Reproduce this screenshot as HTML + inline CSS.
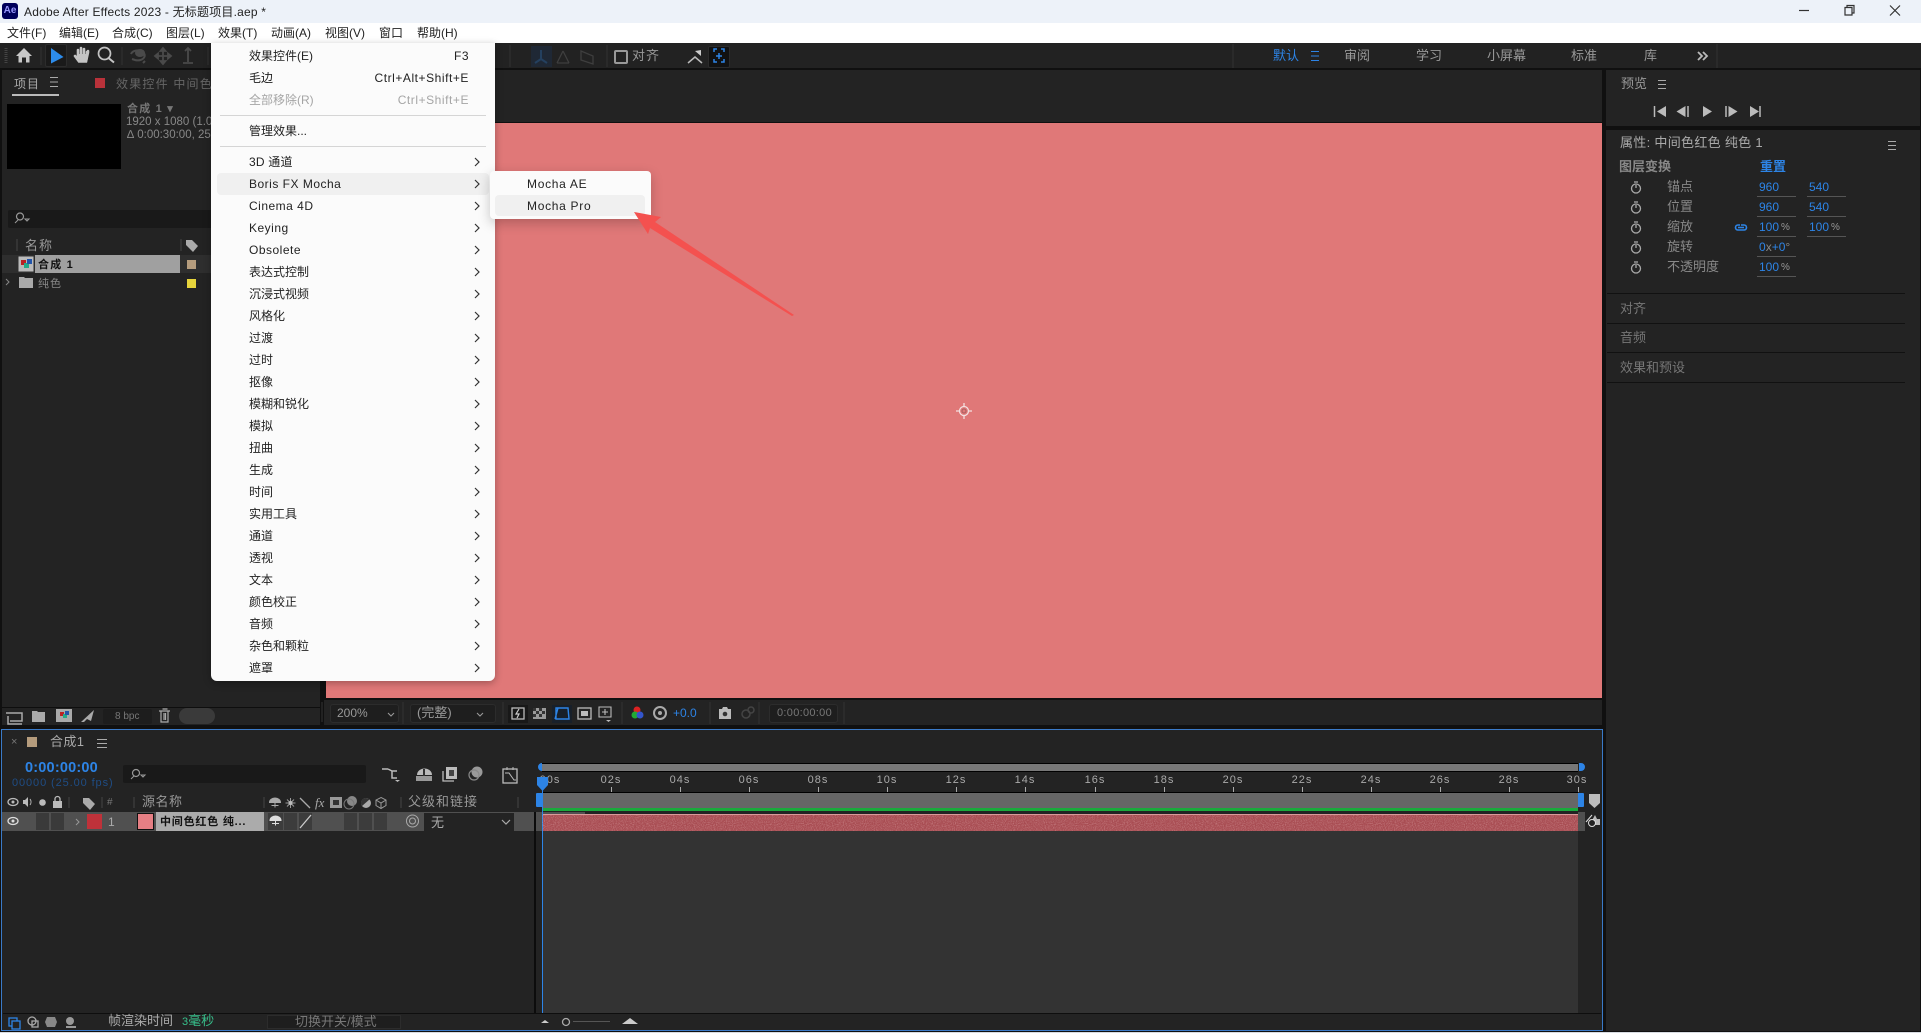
<!DOCTYPE html>
<html lang="zh-CN"><head><meta charset="utf-8"><title>Adobe After Effects 2023</title>
<style>
*{box-sizing:border-box;margin:0;padding:0}
html,body{width:1921px;height:1033px;overflow:hidden;background:#101010}
body{position:relative;font:12px/16px "Liberation Sans","Noto Sans CJK SC",sans-serif;color:#999}
.b,.t{position:absolute}
.t{white-space:nowrap}
.s{letter-spacing:1px}
.bl{color:#2d84e6}
.k{color:#222}
svg{position:absolute;left:0;top:0}
.m{position:absolute;left:211px;top:43px;width:284px;height:638px;background:#fbfbfb;border-radius:0 0 6px 6px;color:#222;box-shadow:0 2px 8px rgba(0,0,0,.3)}
.m .t{left:38px}
.m .l{letter-spacing:.5px;font-size:12px}
.sep{position:absolute;left:9px;width:266px;height:1px;background:#d5d5d5}
.hl{position:absolute;border-radius:4px;background:#f0f0f0}
</style></head><body>
<!-- title + menu bar -->
<div class="b" style="left:0;top:0;width:1921px;height:23px;background:#edf2f9"></div>
<div class="b" style="left:0;top:23px;width:1921px;height:20px;background:#fff"></div>
<div class="b" style="left:2px;top:3px;width:16px;height:16px;background:#00005b;border-radius:3px;color:#9999ff;font:bold 10px/16px 'Liberation Sans',sans-serif;text-align:center">Ae</div>
<span class="t" style="left:24px;top:4px;color:#222;letter-spacing:.2px">Adobe After Effects 2023 - 无标题项目.aep *</span>
<span class="t k" style="left:7px;top:25px">文件(F)</span>
<span class="t k" style="left:59px;top:25px">编辑(E)</span>
<span class="t k" style="left:112px;top:25px">合成(C)</span>
<span class="t k" style="left:166px;top:25px">图层(L)</span>
<span class="t k" style="left:218px;top:25px">效果(T)</span>
<span class="t k" style="left:271px;top:25px">动画(A)</span>
<span class="t k" style="left:325px;top:25px">视图(V)</span>
<span class="t k" style="left:379px;top:25px">窗口</span>
<span class="t k" style="left:417px;top:25px">帮助(H)</span>

<!-- panels -->
<div class="b" style="left:0;top:43px;width:1921px;height:25px;background:#222"></div>
<div class="b" style="left:2px;top:70px;width:318px;height:655px;background:#232323"></div>
<div class="b" style="left:324px;top:70px;width:1278px;height:52px;background:#232323"></div>
<div class="b" style="left:326px;top:123px;width:1276px;height:575px;background:#e07878"></div>
<div class="b" style="left:324px;top:700px;width:1278px;height:25px;background:#232323"></div>
<div class="b" style="left:1606px;top:70px;width:314px;height:56px;background:#232323"></div>
<div class="b" style="left:1606px;top:130px;width:314px;height:901px;background:#232323"></div>
<div class="b" style="left:0;top:1032px;width:1921px;height:1px;background:#d8dce2"></div>

<!-- project panel -->
<span class="t s" style="left:14px;top:76px;color:#aaa">项目</span>
<div class="b" style="left:12px;top:94px;width:47px;height:2px;background:#bbb"></div>
<div class="b" style="left:95px;top:78px;width:10px;height:10px;background:#b9323a"></div>
<span class="t" style="left:116px;top:76px;color:#666;letter-spacing:1.2px">效果控件 中间色</span>
<div class="b" style="left:7px;top:104px;width:114px;height:65px;background:#000"></div>
<span class="t" style="left:127px;top:101px;color:#777;font-weight:bold;font-size:11px;letter-spacing:1.2px">合成 1 ▾</span>
<span class="t" style="left:126px;top:114px;color:#888;font-size:11.5px">1920 x 1080 (1.00)</span>
<span class="t" style="left:127px;top:127px;color:#888;font-size:11.5px">∆ 0:00:30:00, 25.00</span>
<div class="b" style="left:8px;top:210px;width:314px;height:18px;background:#191919;border-radius:2px"></div>
<span class="t s" style="left:25px;top:238px;color:#999;font-size:13px">名称</span>
<div class="b" style="left:2px;top:255px;width:320px;height:18px;background:#2e2e2e"></div>
<div class="b" style="left:35px;top:255px;width:145px;height:18px;background:#a0a0a0"></div>
<span class="t" style="left:38px;top:257px;color:#111;font-weight:bold;font-size:11px;letter-spacing:1.2px">合成 1</span>
<div class="b" style="left:187px;top:260px;width:9px;height:9px;background:#b59c7d"></div>
<span class="t s" style="left:38px;top:276px;color:#888;font-size:11px">纯色</span>
<div class="b" style="left:187px;top:279px;width:9px;height:9px;background:#e6d43c"></div>
<div class="b" style="left:2px;top:707px;width:318px;height:1px;background:#0e0e0e"></div>
<div class="b" style="left:103px;top:709px;width:49px;height:15px;background:#1d1d1d;border-radius:2px"></div>
<span class="t" style="left:115px;top:709px;color:#777;font-size:10px">8 bpc</span>
<div class="b" style="left:179px;top:708px;width:36px;height:16px;background:#3a3a3a;border-radius:8px"></div>

<!-- toolbar right -->
<div class="b" style="left:45px;top:44px;width:22px;height:23px;background:#1a1a1a;border:1px solid #2c2c2c;border-radius:2px"></div>
<div class="b" style="left:531px;top:46px;width:21px;height:21px;background:#1f2835"></div>
<div class="b" style="left:614px;top:50px;width:14px;height:14px;border:2px solid #999;border-radius:2px"></div>
<span class="t s" style="left:632px;top:48px;color:#999;font-size:13px">对齐</span>
<div class="b" style="left:708px;top:46px;width:22px;height:22px;background:#111;border:1px solid #2b2b2b;border-radius:2px"></div>
<span class="t bl" style="left:1273px;top:48px;font-size:13px">默认</span>
<span class="t" style="left:1344px;top:48px;font-size:13px">审阅</span>
<span class="t" style="left:1416px;top:48px;font-size:13px">学习</span>
<span class="t" style="left:1487px;top:48px;font-size:13px">小屏幕</span>
<span class="t" style="left:1571px;top:48px;font-size:13px">标准</span>
<span class="t" style="left:1644px;top:48px;font-size:13px">库</span>

<!-- right panels -->
<span class="t" style="left:1621px;top:76px;font-size:13px">预览</span>
<span class="t" style="left:1620px;top:135px;font-size:13px;color:#aaa;letter-spacing:.3px">属性: 中间色红色 纯色 1</span>
<span class="t" style="left:1619px;top:159px;font-size:13px;color:#888;font-weight:bold">图层变换</span>
<span class="t bl" style="left:1760px;top:159px;font-size:13px;font-weight:bold">重置</span>
<span class="t" style="left:1667px;top:179px;font-size:13px;color:#888">锚点</span>
<span class="t" style="left:1667px;top:199px;font-size:13px;color:#888">位置</span>
<span class="t" style="left:1667px;top:219px;font-size:13px;color:#888">缩放</span>
<span class="t" style="left:1667px;top:239px;font-size:13px;color:#888">旋转</span>
<span class="t" style="left:1667px;top:259px;font-size:13px;color:#888">不透明度</span>
<span class="t bl" style="left:1759px;top:179px">960</span><span class="t bl" style="left:1809px;top:179px">540</span>
<span class="t bl" style="left:1759px;top:199px">960</span><span class="t bl" style="left:1809px;top:199px">540</span>
<span class="t bl" style="left:1759px;top:219px">100</span><span class="t" style="left:1781px;top:220px;font-size:10px">%</span><span class="t bl" style="left:1809px;top:219px">100</span><span class="t" style="left:1831px;top:220px;font-size:10px">%</span>
<span class="t bl" style="left:1759px;top:239px">0<span style="color:#888">x</span>+0<span style="color:#888">°</span></span>
<span class="t bl" style="left:1759px;top:259px">100</span><span class="t" style="left:1781px;top:260px;font-size:10px">%</span>
<div class="b" style="left:1757px;top:196px;width:39px;height:1px;background:#555"></div><div class="b" style="left:1807px;top:196px;width:39px;height:1px;background:#555"></div>
<div class="b" style="left:1757px;top:216px;width:39px;height:1px;background:#555"></div><div class="b" style="left:1807px;top:216px;width:39px;height:1px;background:#555"></div>
<div class="b" style="left:1757px;top:236px;width:39px;height:1px;background:#555"></div><div class="b" style="left:1807px;top:236px;width:39px;height:1px;background:#555"></div>
<div class="b" style="left:1757px;top:256px;width:39px;height:1px;background:#555"></div>
<div class="b" style="left:1757px;top:276px;width:39px;height:1px;background:#555"></div>
<div class="b" style="left:1607px;top:293px;width:298px;height:1px;background:#111"></div>
<span class="t" style="left:1620px;top:301px;font-size:13px;color:#777">对齐</span>
<div class="b" style="left:1607px;top:323px;width:298px;height:1px;background:#111"></div>
<span class="t" style="left:1620px;top:330px;font-size:13px;color:#777">音频</span>
<div class="b" style="left:1607px;top:352px;width:298px;height:1px;background:#111"></div>
<span class="t" style="left:1620px;top:360px;font-size:13px;color:#777">效果和预设</span>
<div class="b" style="left:1607px;top:382px;width:298px;height:1px;background:#111"></div>

<!-- viewer footer -->
<div class="b" style="left:330px;top:704px;width:69px;height:19px;background:#1e1e1e;border:1px solid #2c2c2c;border-radius:3px"></div>
<span class="t" style="left:337px;top:705px;color:#999">200%</span>
<div class="b" style="left:410px;top:704px;width:86px;height:19px;background:#1e1e1e;border:1px solid #2c2c2c;border-radius:3px"></div>
<span class="t" style="left:417px;top:705px;color:#999;font-size:13px">(完整)</span>
<div class="b" style="left:508px;top:705px;width:20px;height:18px;background:#181818"></div>
<div class="b" style="left:552px;top:705px;width:20px;height:18px;background:#18202a"></div>
<span class="t bl" style="left:673px;top:705px">+0.0</span>
<div class="b" style="left:769px;top:704px;width:69px;height:19px;background:#1e1e1e;border:1px solid #2c2c2c;border-radius:3px"></div>
<span class="t" style="left:777px;top:705px;color:#777;font-size:11px;letter-spacing:.3px">0:00:00:00</span>

<!-- timeline -->
<div class="b" style="left:1px;top:729px;width:1602px;height:302px;background:#232323;border:1px solid #3a7ac8"></div>
<span class="t" style="left:11px;top:734px;color:#777;font-size:11px">×</span>
<div class="b" style="left:27px;top:737px;width:10px;height:10px;background:#b59c7d"></div>
<span class="t" style="left:50px;top:734px;color:#aaa;letter-spacing:.4px;font-size:13px">合成1</span>
<span class="t bl" style="left:25px;top:760px;font-weight:bold;font-size:14.5px;letter-spacing:.2px">0:00:00:00</span>
<span class="t" style="left:12px;top:775px;color:#1f4d85;font-size:11px;letter-spacing:.9px">00000 (25.00 fps)</span>
<div class="b" style="left:123px;top:765px;width:243px;height:18px;background:#191919;border-radius:2px"></div>
<span class="t" style="left:142px;top:794px;font-size:13px;color:#999;letter-spacing:.5px">源名称</span>
<span class="t" style="left:408px;top:794px;font-size:13px;color:#999;letter-spacing:1px">父级和链接</span>
<span class="t" style="left:107px;top:795px;font-size:10px;color:#777">#</span>
<div class="b" style="left:2px;top:812px;width:532px;height:19px;background:#505050"></div>
<div class="b" style="left:36px;top:813px;width:13px;height:17px;background:#3a3a3a"></div>
<div class="b" style="left:51px;top:813px;width:13px;height:17px;background:#3a3a3a"></div>
<div class="b" style="left:87px;top:814px;width:15px;height:15px;background:#bf323a"></div>
<span class="t" style="left:108px;top:814px;color:#aaa;font-size:12px">1</span>
<div class="b" style="left:137px;top:813px;width:17px;height:17px;background:#e67f84;border:1px solid #111"></div>
<div class="b" style="left:156px;top:812px;width:108px;height:19px;background:#ababab"></div>
<span class="t" style="left:160px;top:814px;color:#111;font-weight:bold;font-size:11px;letter-spacing:.8px">中间色红色 纯...</span>
<div class="b" style="left:268px;top:813px;width:15px;height:17px;background:#3c3c3c"></div>
<div class="b" style="left:284px;top:813px;width:13px;height:17px;background:#3c3c3c"></div>
<div class="b" style="left:299px;top:813px;width:13px;height:17px;background:#3c3c3c"></div>
<div class="b" style="left:344px;top:813px;width:13px;height:17px;background:#3c3c3c"></div>
<div class="b" style="left:359px;top:813px;width:13px;height:17px;background:#3c3c3c"></div>
<div class="b" style="left:374px;top:813px;width:13px;height:17px;background:#3c3c3c"></div>
<div class="b" style="left:424px;top:813px;width:90px;height:18px;background:#232323"></div>
<span class="t" style="left:431px;top:815px;color:#aaa;font-size:13px">无</span>

<div class="b" style="left:534px;top:812px;width:2px;height:201px;background:#0c0c0c"></div>
<div class="b" style="left:542px;top:763px;width:1036px;height:9px;background:#777;border-top:1px solid #000;border-bottom:1px solid #000"></div>
<div class="b" style="left:542px;top:792px;width:1036px;height:16px;background:#666;border-top:1px solid #000"></div>
<div class="b" style="left:542px;top:808px;width:1036px;height:3px;background:#1aaa3c"></div>
<div class="b" style="left:536px;top:812px;width:49px;height:19px;background:#505050"></div>
<div class="b" style="left:1578px;top:812px;width:7px;height:19px;background:#505050"></div>
<div class="b" style="left:542px;top:814px;width:1036px;height:17px;background:#a84c52;border-top:1px solid #d99a9a"></div>
<div class="b" style="left:542px;top:831px;width:1036px;height:182px;background:#333"></div>
<div class="b" style="left:542px;top:790px;width:1px;height:223px;background:#2d84e6"></div>
<div class="b" style="left:3px;top:1013px;width:1598px;height:1px;background:#0e0e0e"></div>
<span class="t" style="left:108px;top:1013px;color:#aaa;font-size:13px">帧渲染时间</span>
<span class="t" style="left:182px;top:1013px;color:#37c08c;font-size:13px"><span style="font-size:11px">3</span>毫秒</span>
<div class="b" style="left:267px;top:1015px;width:134px;height:14px;background:#1e1e1e;border:1px solid #2c2c2c"></div>
<span class="t" style="left:295px;top:1014px;color:#777;font-size:13px">切换开关/模式</span>

<!-- icons -->
<svg width="1921" height="1033" viewBox="0 0 1921 1033" fill="none">
 <defs><filter id="n" x="0" y="0" width="100%" height="100%"><feTurbulence type="fractalNoise" baseFrequency="0.9" numOctaves="2" seed="4"/><feColorMatrix values="0 0 0 0 0.85  0 0 0 0 0.55  0 0 0 0 0.55  0 0 0 1.6 -0.65"/></filter></defs>
 <rect x="542" y="815" width="1036" height="16" filter="url(#n)" opacity=".55"/>
 <!-- window controls -->
 <path d="M1799 10.500h10" stroke="#333" stroke-width="1.200"/>
 <path d="M1845 7.500h7v7.500h-7zM1847 7.500v-2h7v7.500h-2" stroke="#333" stroke-width="1.200"/>
 <path d="M1890 5.500l10 10M1900 5.500l-10 10" stroke="#333" stroke-width="1.200"/>
 <!-- toolbar -->
 <path d="M6 48v16" stroke="#444" stroke-width="3" stroke-dasharray="1 1"/>
 <path d="M16 56l8-8 8 8h-2.500v6.500h-3.500v-5h-4v5h-3.500v-6.500z" fill="#c8c8c8"/>
 <path d="M51 48l12.500 9-12.500 6.500z" fill="#2d8ceb"/>
 <path d="M75 56l4 5.500h7l2-9v-1.500M78 58v-8M81 57v-9M84 57v-8M87 57v-5" stroke="#c4c4c4" stroke-width="2.600" stroke-linecap="round"/>
 <path d="M76 56l5 6h6l1-4v-4l-9 0z" fill="#c4c4c4"/>
 <circle cx="104.500" cy="53.500" r="6" stroke="#c4c4c4" stroke-width="1.700"/><path d="M108.500 58l5.500 4.500" stroke="#c4c4c4" stroke-width="2"/>
 <path d="M41 47v18M122 47v18M208 47v18M510 45v22M607 45v22M1233 44v24M1717 44v24" stroke="#333" stroke-width="1"/>
 <path d="M131 54a7 5 0 1 1 4 6l-3-1M145 61l-2 2" stroke="#4a4a4a" stroke-width="2"/><ellipse cx="140" cy="53" rx="5" ry="4" fill="#4a4a4a"/>
 <path d="M163 48v16M155 56h16M163 48l-2.500 3h5zM163 64l-2.500-3h5zM155 56l3-2.500v5zM171 56l-3-2.500v5z" stroke="#4a4a4a" stroke-width="1.800"/>
 <path d="M188 48v14M185 51l3-3 3 3M183 63h10" stroke="#4a4a4a" stroke-width="1.800"/>
 <path d="M535 63l6-4 6 4M541 50v9" stroke="#24405f" stroke-width="2"/>
 <path d="M557 63h12M563 51l-6 12M563 51l6 12" stroke="#3e3e3e" stroke-width="1.300"/>
 <path d="M581 51l12 5v8l-12-4zM581 51v9M593 56v8" stroke="#3e3e3e" stroke-width="1.300"/>
 <path d="M688 63l7-6 7 6" stroke="#bbb" stroke-width="1.500"/><path d="M695 51l6-1v6z" fill="#ccc"/>
 <path d="M714 52v-3h3M721 49h3v3M714 59v3h3M721 62h3v-3M719 53v6M716 56h6" stroke="#2d84e6" stroke-width="1.500"/>
 <path d="M1311 51.500h8M1311 56h8M1311 60.500h8" stroke="#2d84e6"/>
 <path d="M1698 52l4 4-4 4M1703 52l4 4-4 4" stroke="#bbb" stroke-width="1.800"/>
 <path d="M50 77.500h8M50 82h8M50 86.500h8" stroke="#aaa"/>
 <!-- preview -->
 <path d="M1658 80.500h8M1658 84.500h8M1658 88.500h8M1888 141.500h8M1888 145.500h8M1888 149.500h8" stroke="#aaa"/>
 <path d="M1654.500 106v11" stroke="#bbb" stroke-width="1.500"/><path d="M1666 106v11l-9-5.500z" fill="#bbb"/>
 <path d="M1688 106v11" stroke="#bbb" stroke-width="1.500"/><path d="M1685.500 106v11l-9-5.500z" fill="#bbb"/>
 <path d="M1703 106v11l9-5.500z" fill="#bbb"/>
 <path d="M1726 106v11" stroke="#bbb" stroke-width="1.500"/><path d="M1728.500 106v11l9-5.500z" fill="#bbb"/>
 <path d="M1760 106v11" stroke="#bbb" stroke-width="1.500"/><path d="M1750 106v11l9-5.500z" fill="#bbb"/>
 <!-- stopwatches -->
 <g stroke="#aaa" stroke-width="1.300">
  <circle cx="1636" cy="188.500" r="4.500"/><path d="M1634 182h4M1636 188v-3"/>
  <circle cx="1636" cy="208.500" r="4.500"/><path d="M1634 202h4M1636 208v-3"/>
  <circle cx="1636" cy="228.500" r="4.500"/><path d="M1634 222h4M1636 228v-3"/>
  <circle cx="1636" cy="248.500" r="4.500"/><path d="M1634 242h4M1636 248v-3"/>
  <circle cx="1636" cy="268.500" r="4.500"/><path d="M1634 262h4M1636 268v-3"/>
 </g>
 <path d="M1740 225h-2a2.500 2.500 0 0 0 0 5h3M1741 230h3a2.500 2.500 0 0 0 0-5h-3M1738 227.500h6" stroke="#2d84e6" stroke-width="1.600"/>
 <!-- project bits -->
 <circle cx="20" cy="216.500" r="3.500" stroke="#999" stroke-width="1.200"/><path d="M18 220l-3 3M25 219h4l-2 2z" stroke="#999"/>
 <path d="M17 239v12M181 239v12" stroke="#444"/>
 <path d="M186 240h6l6 6-5 6-7-7z" fill="#aaa"/>
 <rect x="18.500" y="256.500" width="15" height="15" fill="#bbb" stroke="#777" stroke-dasharray="2 1"/><rect x="21" y="260" width="5" height="5" fill="#b22"/><rect x="24" y="263" width="5" height="5" fill="#2a8"/><rect x="27" y="259" width="5" height="5" fill="#25a"/>
 <path d="M6 279l3 3-3 3" stroke="#888"/>
 <path d="M19 277h5l1 1h8v10H19z" fill="#aaa"/>
 <!-- project footer -->
 <path d="M6 713h16v8H10M8 716v8h14" stroke="#aaa" stroke-width="1.500"/>
 <path d="M32 711h5l1 1h7v10H32z" fill="#aaa"/>
 <rect x="56" y="709" width="16" height="13" fill="#aaa"/><rect x="60" y="712" width="4" height="4" fill="#b22"/><rect x="63" y="714" width="4" height="4" fill="#2a8"/><rect x="65" y="711" width="4" height="4" fill="#25a"/>
 <path d="M81 722l13-12-3 11-4-2-3 3z" fill="#aaa"/>
 <path d="M159 711h11M161 711v11h7v-11M164 713v7M165.500 713v7M162.500 709h5" stroke="#aaa" stroke-width="1.200"/>
 <path d="M388 711l3 3 3-3M477 711l3 3 3-3" stroke="#999" stroke-width="1.100" transform="translate(0,2)"/>
 <!-- viewer footer icons -->
 <rect x="512" y="708" width="12" height="11" stroke="#bbb" stroke-width="1.300"/><path d="M519 709l-3 5h3l-2 4" stroke="#ccc" stroke-width="1.200"/>
 <rect x="533" y="708" width="13" height="11" fill="#999"/><path d="M533 708h3v3h-3zM539 708h3v3h-3zM536 711h3v3h-3zM542 711h3v3h-3zM533 714h3v3h-3zM539 714h3v3h-3z" fill="#333"/>
 <path d="M556 708h12l1 11h-13zM555 719l3-11" stroke="#2d84e6" stroke-width="1.400"/>
 <rect x="578" y="708" width="13" height="11" stroke="#bbb" stroke-width="1.300"/><rect x="581" y="711" width="7" height="5" fill="#bbb"/>
 <path d="M599 707h12v10h-12zM605 709v6M602 712h6" stroke="#bbb" stroke-width="1.100"/><path d="M606 720h5l-2.500 2z" fill="#bbb"/>
 <circle cx="637" cy="710" r="3.500" fill="#d22"/><circle cx="635" cy="715" r="3.500" fill="#2a3"/><circle cx="640" cy="715" r="3.500" fill="#35c"/>
 <circle cx="660" cy="713" r="6" stroke="#aaa" stroke-width="2"/><circle cx="660" cy="713" r="2" fill="#aaa"/>
 <path d="M719 709h3l1-2h4l1 2h3v10h-12z" fill="#bbb"/><circle cx="725" cy="714" r="2.300" fill="#333"/>
 <circle cx="746" cy="714" r="4" stroke="#444" stroke-width="1.500"/><circle cx="751" cy="710" r="3" stroke="#444" stroke-width="1.500"/>
 <path d="M322 702v20M403 702v22M503 702v22M622 702v22M710 702v22M759 702v22M844 702v22" stroke="#333"/>
 <!-- timeline header -->
 <path d="M97 739.500h10M97 743.500h10M97 747.500h10" stroke="#aaa"/>
 <circle cx="136" cy="773" r="3.500" stroke="#999" stroke-width="1.200"/><path d="M134 776l-3 3M141 775h4l-2 2z" stroke="#999"/>
 <path d="M382 769h6M388 769l4 2h5M392 771v7h5" stroke="#bbb" stroke-width="1.500"/><path d="M395 780h5l-2.500 2z" fill="#bbb"/>
 <path d="M417 775a7.500 6.500 0 0 1 15 0z" fill="#bbb"/><path d="M416 776h16v5h-16z" fill="#999"/><path d="M424 769v7" stroke="#333" stroke-width="2"/>
 <rect x="446" y="767" width="11" height="12" fill="#bbb"/><path d="M443 771v10h11" stroke="#bbb" stroke-width="1.300"/><rect x="449" y="770" width="5" height="6" fill="#444"/>
 <circle cx="477" cy="772" r="5.500" fill="#999"/><circle cx="474" cy="775" r="5" stroke="#888" stroke-width="1.200"/>
 <rect x="503" y="769" width="14" height="14" stroke="#bbb" stroke-width="1.300"/><path d="M505 773h4l5 7h2M507 767v3M513 767v3" stroke="#bbb"/>
 <!-- switches header -->
 <ellipse cx="13" cy="802" rx="5" ry="3.500" stroke="#bbb" stroke-width="1.300"/><circle cx="13" cy="802" r="1.500" fill="#bbb"/>
 <path d="M23 800h2l3-3v10l-3-3h-2z" fill="#bbb"/><path d="M30 799a5 5 0 0 1 0 6" stroke="#bbb"/>
 <circle cx="42.500" cy="802.500" r="3.300" fill="#bbb"/>
 <rect x="53" y="801" width="9" height="7" fill="#bbb"/><path d="M55 801v-2a2.500 2.500 0 0 1 5 0v2" stroke="#bbb" stroke-width="1.300"/>
 <path d="M69 797v11M102 797v11M134 797v11M264 797v11M401 797v11M518 797v11" stroke="#444"/>
 <path d="M83 798h6l6 6-5 6-7-7z" fill="#aaa"/>
 <path d="M269.500 802.500a5.500 4.500 0 0 1 11 0zM275 802.500v5M271.500 805.500h7" stroke="#aaa" fill="#aaa"/>
 <path d="M290.500 798v10M285.500 803h10M287 799.500l7 7M294 799.500l-7 7" stroke="#999"/><circle cx="290.500" cy="803" r="2" fill="#bbb"/>
 <path d="M300 798l10 10" stroke="#aaa" stroke-width="1.300"/>
 <text x="315" y="807" fill="#aaa" font-family="Liberation Serif,serif" font-style="italic" font-size="13">fx</text>
 <rect x="330" y="797" width="12" height="11" fill="#999"/><rect x="333" y="800" width="6" height="5" fill="#333"/>
 <circle cx="352" cy="801" r="5" fill="#888"/><circle cx="349" cy="804" r="5" stroke="#777"/>
 <circle cx="366" cy="803" r="5" fill="#aaa"/><path d="M366 798a5 5 0 0 0-4 8l8-7" fill="#333"/>
 <path d="M381 797.500l5 2.500v5.500l-5 3-5-3V800zM376 800l5 3 5-3M381 803v5" stroke="#999"/>
 <!-- row -->
 <ellipse cx="13" cy="821" rx="5" ry="3.500" stroke="#ddd" stroke-width="1.300"/><circle cx="13" cy="821" r="1.500" fill="#ddd"/>
 <path d="M76 819l3 3-3 3" stroke="#999" stroke-width="1"/>
 <path d="M270 820.500a5.500 4.500 0 0 1 11 0zM275.500 820.500v5M272 823.500h7" stroke="#ddd" fill="#ddd"/>
 <path d="M300 828l11-13" stroke="#ccc" stroke-width="1.300"/>
 <circle cx="412.500" cy="821" r="6" stroke="#aaa"/><circle cx="412.500" cy="821" r="3" stroke="#aaa"/>
 <path d="M502 820l4 4 4-4" stroke="#aaa" stroke-width="1.200"/>
 <!-- timeline ruler -->
 <g fill="#aaa" font-family="Liberation Sans,sans-serif" font-size="11" letter-spacing="1" text-anchor="middle">
  <text x="550" y="783">00s</text><text x="611" y="783">02s</text><text x="680" y="783">04s</text><text x="749" y="783">06s</text><text x="818" y="783">08s</text><text x="887" y="783">10s</text><text x="956" y="783">12s</text><text x="1025" y="783">14s</text><text x="1095" y="783">16s</text><text x="1164" y="783">18s</text><text x="1233" y="783">20s</text><text x="1302" y="783">22s</text><text x="1371" y="783">24s</text><text x="1440" y="783">26s</text><text x="1509" y="783">28s</text><text x="1577" y="783">30s</text>
 </g>
 <path d="M611.500 787v5M680.500 787v5M749.500 787v5M818.500 787v5M887.500 787v5M956.500 787v5M1025.500 787v5M1095.500 787v5M1164.500 787v5M1233.500 787v5M1302.500 787v5M1371.500 787v5M1440.500 787v5M1509.500 787v5M1578.500 787v5" stroke="#aaa"/>
 <!-- handles -->
 <path d="M542 763v8a4 4 0 0 1-4-4 4 4 0 0 1 4-4zM1579 763h2a4 4 0 0 1 4 4 4 4 0 0 1-4 4h-2z" fill="#2d84e6"/>
 <path d="M537 793h5v14h-5a1 1 0 0 1-1-1v-12a1 1 0 0 1 1-1zM1578 793h5a1 1 0 0 1 1 1v12a1 1 0 0 1-1 1h-5z" fill="#2d84e6"/>
 <path d="M537 777h11v8l-5.500 6-5.500-6z" fill="#2d84e6"/>
 <path d="M1589 794h11v9l-5.500 5-5.500-5z" fill="#bdbdbd"/>
 <path d="M1590 824l5-9 2 4h3v6h-5" fill="#bbb"/><circle cx="1592" cy="823" r="3.500" stroke="#ddd" fill="#222"/><path d="M1586 822l6-7" stroke="#ddd"/>
 <!-- bottom bar -->
 <rect x="9" y="1018" width="8" height="8" stroke="#2d84e6" stroke-width="1.300"/><rect x="12" y="1021" width="8" height="8" stroke="#2d84e6" stroke-width="1.300" fill="#232323"/>
 <circle cx="32" cy="1021" r="4" stroke="#aaa" stroke-width="1.300"/><rect x="32" y="1021" width="6" height="6" stroke="#aaa" stroke-width="1.300"/>
 <path d="M47 1017h8l2 5-2 5h-8l-2-5z" fill="#888"/>
 <circle cx="70" cy="1021" r="4" fill="#999"/><path d="M66 1027h10" stroke="#999" stroke-width="2"/>
 <path d="M541 1023h8l-4-3z" fill="#ccc"/>
 <path d="M573 1021.500h37" stroke="#555"/>
 <circle cx="566" cy="1022" r="3.500" stroke="#aaa" stroke-width="1.300"/>
 <path d="M622 1024h16l-8-6z" fill="#ccc"/>
 <!-- viewer crosshair -->
 <circle cx="964" cy="411" r="4.500" stroke="#f2e0e0" stroke-width="1.300"/><circle cx="964" cy="411" r="2" stroke="#a86060"/><path d="M964 403v3.500M964 415.500v3.500M956 411h3.500M968.500 411h3.500" stroke="#f2e0e0" stroke-width="1.300"/>
</svg>

<!-- effect menu -->
<div class="m">
 <span class="t" style="top:5px">效果控件(E)</span><span class="t" style="left:auto;right:26px;top:5px;letter-spacing:.5px">F3</span>
 <span class="t" style="top:27px">毛边</span><span class="t" style="left:auto;right:26px;top:27px;letter-spacing:.55px">Ctrl+Alt+Shift+E</span>
 <span class="t" style="top:49px;color:#a5a5a5">全部移除(R)</span><span class="t" style="left:auto;right:26px;top:49px;color:#a5a5a5;letter-spacing:.55px">Ctrl+Shift+E</span>
 <div class="sep" style="top:72px"></div>
 <span class="t" style="top:80px">管理效果...</span>
 <div class="sep" style="top:103px"></div>
 <div class="hl" style="left:6px;top:130px;width:272px;height:22px"></div>
 <span class="t" style="top:111px;letter-spacing:.2px">3D 通道</span>
 <span class="t l" style="top:133px">Boris FX Mocha</span>
 <span class="t l" style="top:155px">Cinema 4D</span>
 <span class="t l" style="top:177px">Keying</span>
 <span class="t l" style="top:199px">Obsolete</span>
 <span class="t" style="top:221px">表达式控制</span>
 <span class="t" style="top:243px">沉浸式视频</span>
 <span class="t" style="top:265px">风格化</span>
 <span class="t" style="top:287px">过渡</span>
 <span class="t" style="top:309px">过时</span>
 <span class="t" style="top:331px">抠像</span>
 <span class="t" style="top:353px">模糊和锐化</span>
 <span class="t" style="top:375px">模拟</span>
 <span class="t" style="top:397px">扭曲</span>
 <span class="t" style="top:419px">生成</span>
 <span class="t" style="top:441px">时间</span>
 <span class="t" style="top:463px">实用工具</span>
 <span class="t" style="top:485px">通道</span>
 <span class="t" style="top:507px">透视</span>
 <span class="t" style="top:529px">文本</span>
 <span class="t" style="top:551px">颜色校正</span>
 <span class="t" style="top:573px">音频</span>
 <span class="t" style="top:595px">杂色和颗粒</span>
 <span class="t" style="top:617px">遮罩</span>
 <svg width="284" height="638" fill="none" stroke="#333" stroke-width="1.200">
  <path d="M264 115l4 4-4 4M264 137l4 4-4 4M264 159l4 4-4 4M264 181l4 4-4 4M264 203l4 4-4 4M264 225l4 4-4 4M264 247l4 4-4 4M264 269l4 4-4 4M264 291l4 4-4 4M264 313l4 4-4 4M264 335l4 4-4 4M264 357l4 4-4 4M264 379l4 4-4 4M264 401l4 4-4 4M264 423l4 4-4 4M264 445l4 4-4 4M264 467l4 4-4 4M264 489l4 4-4 4M264 511l4 4-4 4M264 533l4 4-4 4M264 555l4 4-4 4M264 577l4 4-4 4M264 599l4 4-4 4M264 621l4 4-4 4"/>
 </svg>
</div>
<div class="b" style="left:490px;top:171px;width:161px;height:48px;background:#fbfbfb;border-radius:4px;box-shadow:0 4px 12px rgba(0,0,0,.22)">
 <div class="hl" style="left:5px;top:24px;width:150px;height:21px"></div>
 <span class="t" style="left:37px;top:5px;color:#222;letter-spacing:.7px">Mocha AE</span>
 <span class="t" style="left:37px;top:27px;color:#222;letter-spacing:.7px">Mocha Pro</span>
</div>
<svg width="1921" height="1033" viewBox="0 0 1921 1033"><path d="M634 212L661 217L655 222L794 315L792 316L650 228L648 234Z" fill="#f4514f"/></svg>
</body></html>
